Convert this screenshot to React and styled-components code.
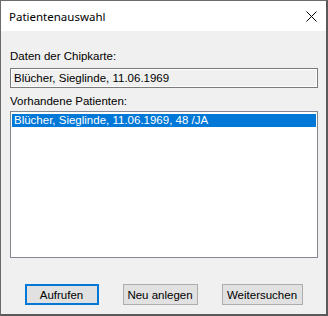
import styled, { createGlobalStyle } from "styled-components";

const GlobalStyle = createGlobalStyle`
  html, body {
    margin: 0;
    padding: 0;
    background: #ffffff;
  }
  * {
    box-sizing: border-box;
  }
`;

const Window = styled.div`
  width: 328px;
  height: 316px;
  display: flex;
  flex-direction: column;
  border-left: 1px solid #6b6b6b;
  border-top: 1px solid #6b6b6b;
  border-right: 2px solid #5a5a5a;
  border-bottom: 2px solid #5a5a5a;
  background: #f0f0f0;
  font-family: "Liberation Sans", Arial, sans-serif;
  font-size: 11.5px;
  color: #000;
`;

const TitleBar = styled.div`
  height: 30px;
  flex: none;
  background: #ffffff;
  display: flex;
  align-items: center;
  justify-content: space-between;
  padding: 0 9px 0 8px;
`;

const Title = styled.span`
  font-family: "Noto Sans", "Liberation Sans", sans-serif;
  font-size: 11.5px;
  color: #000;
`;

const CloseButton = styled.button`
  width: 12px;
  height: 12px;
  border: none;
  background: none;
  padding: 0;
  display: flex;
  align-items: center;
  justify-content: center;
  cursor: pointer;
`;

const Body = styled.div`
  flex: 1;
  display: flex;
  flex-direction: column;
  padding: 19px 8px 0 9px;
`;

const Label = styled.div`
  line-height: 13px;
  height: 13px;
  margin-top: ${(p) => p.$gap || 0}px;
`;

const ReadOnlyField = styled.div`
  margin-top: 5px;
  height: 20px;
  border: 1px solid #7a7a7a;
  box-shadow: inset 0 0 0 1px #ffffff;
  background: #f0f0f0;
  display: flex;
  align-items: center;
  padding-left: 3px;
  line-height: 13px;
`;

const ListBox = styled.div`
  margin-top: 3px;
  height: 147px;
  border: 1px solid #828790;
  background: #ffffff;
  padding: 2px 1px 0 1px;
`;

const ListItem = styled.div`
  height: 13px;
  line-height: 13px;
  padding-left: 2px;
  background: ${(p) => (p.$selected ? "#0078d7" : "transparent")};
  color: ${(p) => (p.$selected ? "#ffffff" : "#000")};
  white-space: nowrap;
`;

const ButtonRow = styled.div`
  margin-top: 26px;
  display: flex;
  justify-content: center;
  gap: 24px;
  padding-right: 1px;
`;

const Button = styled.button`
  width: ${(p) => p.$width}px;
  height: 21px;
  background: #e1e1e1;
  border: ${(p) => (p.$focused ? "2px solid #0078d7" : "1px solid #adadad")};
  font-family: "Liberation Sans", Arial, sans-serif;
  font-size: 11.5px;
  color: #000;
  padding: 0;
  cursor: pointer;
`;

export default function App() {
  return (
    <>
      <GlobalStyle />
      <Window>
        <TitleBar>
          <Title>Patientenauswahl</Title>
          <CloseButton aria-label="Schließen">
            <svg width="11" height="11" viewBox="0 0 11 11">
              <path d="M0.5 0.5 L10.5 10.5 M10.5 0.5 L0.5 10.5" stroke="#000" strokeWidth="1" />
            </svg>
          </CloseButton>
        </TitleBar>
        <Body>
          <Label>Daten der Chipkarte:</Label>
          <ReadOnlyField>Blücher, Sieglinde, 11.06.1969</ReadOnlyField>
          <Label $gap={7}>Vorhandene Patienten:</Label>
          <ListBox>
            <ListItem $selected>Blücher, Sieglinde, 11.06.1969, 48 /JA</ListItem>
          </ListBox>
          <ButtonRow>
            <Button $width={74} $focused>Aufrufen</Button>
            <Button $width={75}>Neu anlegen</Button>
            <Button $width={81}>Weitersuchen</Button>
          </ButtonRow>
        </Body>
      </Window>
    </>
  );
}
